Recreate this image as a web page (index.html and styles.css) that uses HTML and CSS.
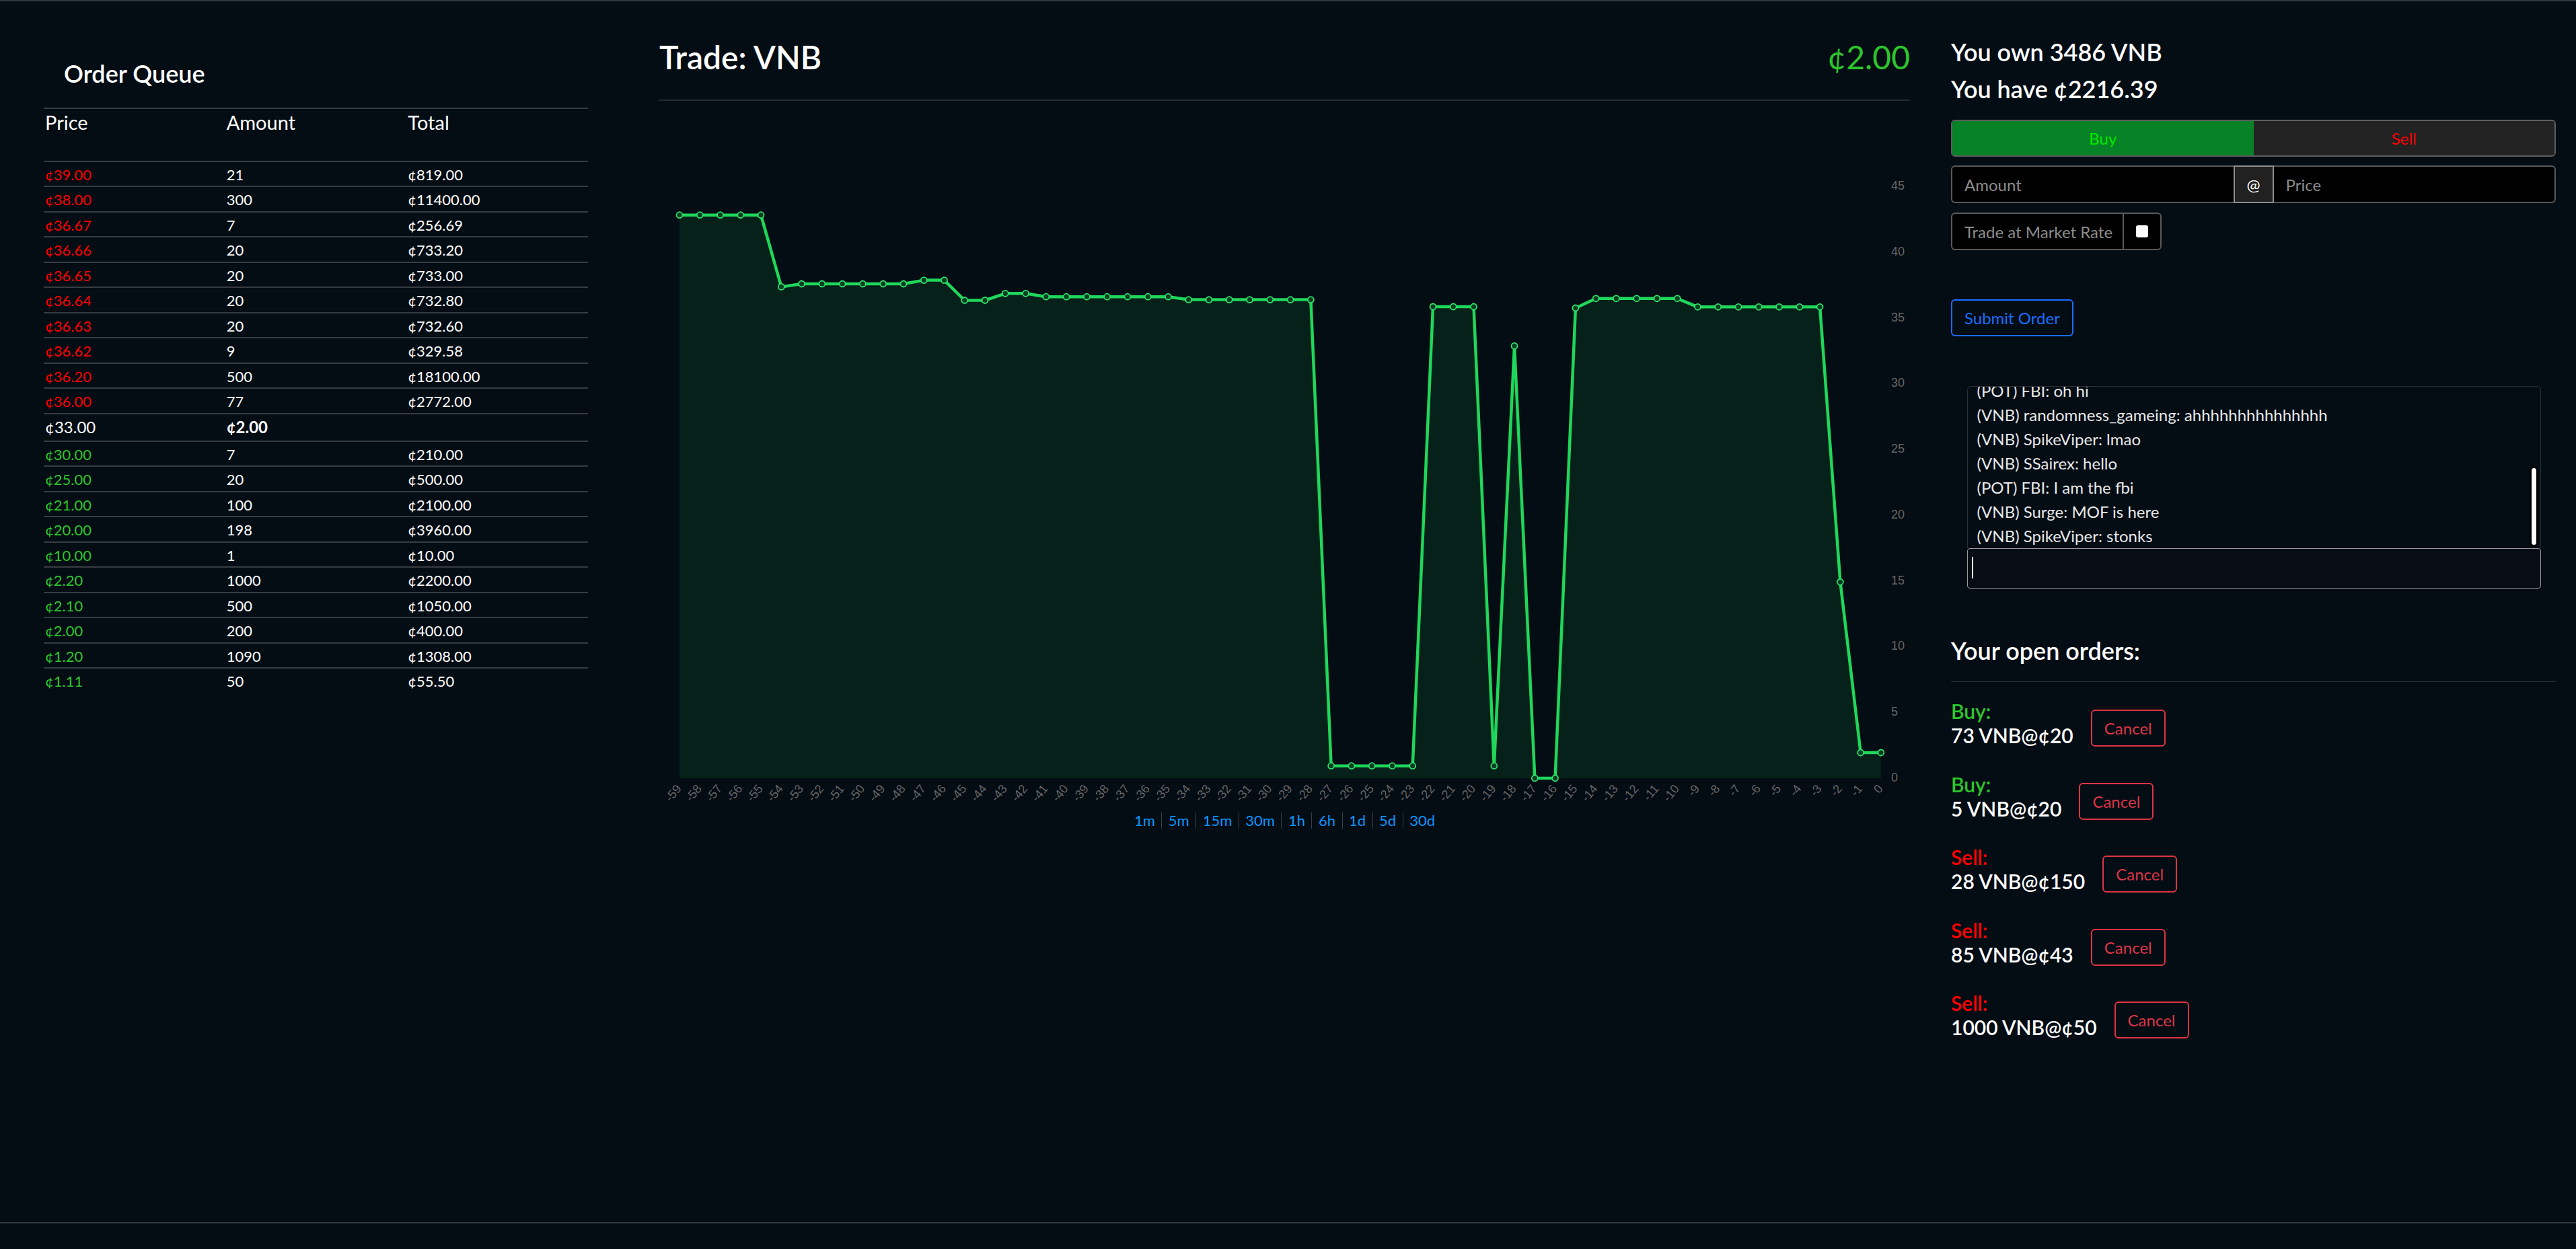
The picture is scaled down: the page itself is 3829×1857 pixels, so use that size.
FILE: index.html
```html
<!DOCTYPE html>
<html lang="en">
<head>
<meta charset="utf-8">
<title>Trade: VNB</title>
<link rel="stylesheet" href="styles.css">
</head>
<body>
<div class="app">
  <main class="layout">
    <section class="col col-queue">
      <h4 class="queue-title">Order Queue</h4>
      <table class="queue">
        <thead>
          <tr><th>Price</th><th>Amount</th><th>Total</th></tr>
        </thead>
        <tbody>
          <tr class="ask"><td class="price">¢39.00</td><td>21</td><td>¢819.00</td></tr>
          <tr class="ask"><td class="price">¢38.00</td><td>300</td><td>¢11400.00</td></tr>
          <tr class="ask"><td class="price">¢36.67</td><td>7</td><td>¢256.69</td></tr>
          <tr class="ask"><td class="price">¢36.66</td><td>20</td><td>¢733.20</td></tr>
          <tr class="ask"><td class="price">¢36.65</td><td>20</td><td>¢733.00</td></tr>
          <tr class="ask"><td class="price">¢36.64</td><td>20</td><td>¢732.80</td></tr>
          <tr class="ask"><td class="price">¢36.63</td><td>20</td><td>¢732.60</td></tr>
          <tr class="ask"><td class="price">¢36.62</td><td>9</td><td>¢329.58</td></tr>
          <tr class="ask"><td class="price">¢36.20</td><td>500</td><td>¢18100.00</td></tr>
          <tr class="ask"><td class="price">¢36.00</td><td>77</td><td>¢2772.00</td></tr>
          <tr class="mid"><td>¢33.00</td><td><b>¢2.00</b></td><td></td></tr>
          <tr class="bid"><td class="price">¢30.00</td><td>7</td><td>¢210.00</td></tr>
          <tr class="bid"><td class="price">¢25.00</td><td>20</td><td>¢500.00</td></tr>
          <tr class="bid"><td class="price">¢21.00</td><td>100</td><td>¢2100.00</td></tr>
          <tr class="bid"><td class="price">¢20.00</td><td>198</td><td>¢3960.00</td></tr>
          <tr class="bid"><td class="price">¢10.00</td><td>1</td><td>¢10.00</td></tr>
          <tr class="bid"><td class="price">¢2.20</td><td>1000</td><td>¢2200.00</td></tr>
          <tr class="bid"><td class="price">¢2.10</td><td>500</td><td>¢1050.00</td></tr>
          <tr class="bid"><td class="price">¢2.00</td><td>200</td><td>¢400.00</td></tr>
          <tr class="bid"><td class="price">¢1.20</td><td>1090</td><td>¢1308.00</td></tr>
          <tr class="bid"><td class="price">¢1.11</td><td>50</td><td>¢55.50</td></tr>
        </tbody>
      </table>
    </section>

    <section class="col col-chart">
      <div class="chart-head">
        <h2>Trade: VNB</h2>
        <span class="last">¢2.00</span>
      </div>
      <hr class="chart-rule">
      <svg class="chart" viewBox="0 0 1859 1004" width="1859" height="1004">
        <polygon class="area" points="30,957 30,119.7 60.27,119.7 90.54,119.7 120.81,119.7 151.08,119.7 181.35,226.4 211.62,222 241.89,222 272.16,222 302.43,222 332.7,222 362.97,222 393.24,216.6 423.51,216.6 453.78,246.5 484.05,246.5 514.32,236.3 544.59,236.3 574.86,241.2 605.13,241.2 635.4,241.2 665.67,241.2 695.94,241.2 726.21,241.2 756.48,241.2 786.75,245.6 817.02,245.6 847.29,245.6 877.56,245.6 907.83,245.6 938.1,245.6 968.37,245.6 998.64,938.7 1028.91,938.7 1059.18,938.7 1089.45,938.7 1119.72,938.7 1149.99,256 1180.26,256 1210.53,256 1240.8,938.7 1271.07,314.4 1301.34,957 1331.61,957 1361.88,258 1392.15,243.8 1422.42,243.8 1452.69,243.8 1482.96,243.8 1513.23,243.8 1543.5,256.3 1573.77,256.3 1604.04,256.3 1634.31,256.3 1664.58,256.3 1694.85,256.3 1725.12,256.3 1755.39,665.3 1785.66,919 1815.93,919 1815.93,957"/>
        <polyline class="line" points="30,119.7 60.27,119.7 90.54,119.7 120.81,119.7 151.08,119.7 181.35,226.4 211.62,222 241.89,222 272.16,222 302.43,222 332.7,222 362.97,222 393.24,216.6 423.51,216.6 453.78,246.5 484.05,246.5 514.32,236.3 544.59,236.3 574.86,241.2 605.13,241.2 635.4,241.2 665.67,241.2 695.94,241.2 726.21,241.2 756.48,241.2 786.75,245.6 817.02,245.6 847.29,245.6 877.56,245.6 907.83,245.6 938.1,245.6 968.37,245.6 998.64,938.7 1028.91,938.7 1059.18,938.7 1089.45,938.7 1119.72,938.7 1149.99,256 1180.26,256 1210.53,256 1240.8,938.7 1271.07,314.4 1301.34,957 1331.61,957 1361.88,258 1392.15,243.8 1422.42,243.8 1452.69,243.8 1482.96,243.8 1513.23,243.8 1543.5,256.3 1573.77,256.3 1604.04,256.3 1634.31,256.3 1664.58,256.3 1694.85,256.3 1725.12,256.3 1755.39,665.3 1785.66,919 1815.93,919"/>
        <g class="pts">
          <circle cx="30" cy="119.7" r="4.5"/><circle cx="60.27" cy="119.7" r="4.5"/><circle cx="90.54" cy="119.7" r="4.5"/><circle cx="120.81" cy="119.7" r="4.5"/><circle cx="151.08" cy="119.7" r="4.5"/>
          <circle cx="181.35" cy="226.4" r="4.5"/><circle cx="211.62" cy="222" r="4.5"/><circle cx="241.89" cy="222" r="4.5"/><circle cx="272.16" cy="222" r="4.5"/><circle cx="302.43" cy="222" r="4.5"/>
          <circle cx="332.7" cy="222" r="4.5"/><circle cx="362.97" cy="222" r="4.5"/><circle cx="393.24" cy="216.6" r="4.5"/><circle cx="423.51" cy="216.6" r="4.5"/><circle cx="453.78" cy="246.5" r="4.5"/>
          <circle cx="484.05" cy="246.5" r="4.5"/><circle cx="514.32" cy="236.3" r="4.5"/><circle cx="544.59" cy="236.3" r="4.5"/><circle cx="574.86" cy="241.2" r="4.5"/><circle cx="605.13" cy="241.2" r="4.5"/>
          <circle cx="635.4" cy="241.2" r="4.5"/><circle cx="665.67" cy="241.2" r="4.5"/><circle cx="695.94" cy="241.2" r="4.5"/><circle cx="726.21" cy="241.2" r="4.5"/><circle cx="756.48" cy="241.2" r="4.5"/>
          <circle cx="786.75" cy="245.6" r="4.5"/><circle cx="817.02" cy="245.6" r="4.5"/><circle cx="847.29" cy="245.6" r="4.5"/><circle cx="877.56" cy="245.6" r="4.5"/><circle cx="907.83" cy="245.6" r="4.5"/>
          <circle cx="938.1" cy="245.6" r="4.5"/><circle cx="968.37" cy="245.6" r="4.5"/><circle cx="998.64" cy="938.7" r="4.5"/><circle cx="1028.91" cy="938.7" r="4.5"/><circle cx="1059.18" cy="938.7" r="4.5"/>
          <circle cx="1089.45" cy="938.7" r="4.5"/><circle cx="1119.72" cy="938.7" r="4.5"/><circle cx="1149.99" cy="256" r="4.5"/><circle cx="1180.26" cy="256" r="4.5"/><circle cx="1210.53" cy="256" r="4.5"/>
          <circle cx="1240.8" cy="938.7" r="4.5"/><circle cx="1271.07" cy="314.4" r="4.5"/><circle cx="1301.34" cy="957" r="4.5"/><circle cx="1331.61" cy="957" r="4.5"/><circle cx="1361.88" cy="258" r="4.5"/>
          <circle cx="1392.15" cy="243.8" r="4.5"/><circle cx="1422.42" cy="243.8" r="4.5"/><circle cx="1452.69" cy="243.8" r="4.5"/><circle cx="1482.96" cy="243.8" r="4.5"/><circle cx="1513.23" cy="243.8" r="4.5"/>
          <circle cx="1543.5" cy="256.3" r="4.5"/><circle cx="1573.77" cy="256.3" r="4.5"/><circle cx="1604.04" cy="256.3" r="4.5"/><circle cx="1634.31" cy="256.3" r="4.5"/><circle cx="1664.58" cy="256.3" r="4.5"/>
          <circle cx="1694.85" cy="256.3" r="4.5"/><circle cx="1725.12" cy="256.3" r="4.5"/><circle cx="1755.39" cy="665.3" r="4.5"/><circle cx="1785.66" cy="919" r="4.5"/><circle cx="1815.93" cy="919" r="4.5"/>
        </g>
        <g class="ylab">
          <text x="1831" y="957">0</text>
          <text x="1831" y="859.25">5</text>
          <text x="1831" y="761.5">10</text>
          <text x="1831" y="663.75">15</text>
          <text x="1831" y="566">20</text>
          <text x="1831" y="468.25">25</text>
          <text x="1831" y="370.5">30</text>
          <text x="1831" y="272.75">35</text>
          <text x="1831" y="175">40</text>
          <text x="1831" y="77.25">45</text>
        </g>
        <g class="xlab">
          <text transform="translate(30 970) rotate(-50)">-59</text>
          <text transform="translate(60.27 970) rotate(-50)">-58</text>
          <text transform="translate(90.54 970) rotate(-50)">-57</text>
          <text transform="translate(120.81 970) rotate(-50)">-56</text>
          <text transform="translate(151.08 970) rotate(-50)">-55</text>
          <text transform="translate(181.35 970) rotate(-50)">-54</text>
          <text transform="translate(211.62 970) rotate(-50)">-53</text>
          <text transform="translate(241.89 970) rotate(-50)">-52</text>
          <text transform="translate(272.16 970) rotate(-50)">-51</text>
          <text transform="translate(302.43 970) rotate(-50)">-50</text>
          <text transform="translate(332.7 970) rotate(-50)">-49</text>
          <text transform="translate(362.97 970) rotate(-50)">-48</text>
          <text transform="translate(393.24 970) rotate(-50)">-47</text>
          <text transform="translate(423.51 970) rotate(-50)">-46</text>
          <text transform="translate(453.78 970) rotate(-50)">-45</text>
          <text transform="translate(484.05 970) rotate(-50)">-44</text>
          <text transform="translate(514.32 970) rotate(-50)">-43</text>
          <text transform="translate(544.59 970) rotate(-50)">-42</text>
          <text transform="translate(574.86 970) rotate(-50)">-41</text>
          <text transform="translate(605.13 970) rotate(-50)">-40</text>
          <text transform="translate(635.4 970) rotate(-50)">-39</text>
          <text transform="translate(665.67 970) rotate(-50)">-38</text>
          <text transform="translate(695.94 970) rotate(-50)">-37</text>
          <text transform="translate(726.21 970) rotate(-50)">-36</text>
          <text transform="translate(756.48 970) rotate(-50)">-35</text>
          <text transform="translate(786.75 970) rotate(-50)">-34</text>
          <text transform="translate(817.02 970) rotate(-50)">-33</text>
          <text transform="translate(847.29 970) rotate(-50)">-32</text>
          <text transform="translate(877.56 970) rotate(-50)">-31</text>
          <text transform="translate(907.83 970) rotate(-50)">-30</text>
          <text transform="translate(938.1 970) rotate(-50)">-29</text>
          <text transform="translate(968.37 970) rotate(-50)">-28</text>
          <text transform="translate(998.64 970) rotate(-50)">-27</text>
          <text transform="translate(1028.91 970) rotate(-50)">-26</text>
          <text transform="translate(1059.18 970) rotate(-50)">-25</text>
          <text transform="translate(1089.45 970) rotate(-50)">-24</text>
          <text transform="translate(1119.72 970) rotate(-50)">-23</text>
          <text transform="translate(1149.99 970) rotate(-50)">-22</text>
          <text transform="translate(1180.26 970) rotate(-50)">-21</text>
          <text transform="translate(1210.53 970) rotate(-50)">-20</text>
          <text transform="translate(1240.8 970) rotate(-50)">-19</text>
          <text transform="translate(1271.07 970) rotate(-50)">-18</text>
          <text transform="translate(1301.34 970) rotate(-50)">-17</text>
          <text transform="translate(1331.61 970) rotate(-50)">-16</text>
          <text transform="translate(1361.88 970) rotate(-50)">-15</text>
          <text transform="translate(1392.15 970) rotate(-50)">-14</text>
          <text transform="translate(1422.42 970) rotate(-50)">-13</text>
          <text transform="translate(1452.69 970) rotate(-50)">-12</text>
          <text transform="translate(1482.96 970) rotate(-50)">-11</text>
          <text transform="translate(1513.23 970) rotate(-50)">-10</text>
          <text transform="translate(1543.5 970) rotate(-50)">-9</text>
          <text transform="translate(1573.77 970) rotate(-50)">-8</text>
          <text transform="translate(1604.04 970) rotate(-50)">-7</text>
          <text transform="translate(1634.31 970) rotate(-50)">-6</text>
          <text transform="translate(1664.58 970) rotate(-50)">-5</text>
          <text transform="translate(1694.85 970) rotate(-50)">-4</text>
          <text transform="translate(1725.12 970) rotate(-50)">-3</text>
          <text transform="translate(1755.39 970) rotate(-50)">-2</text>
          <text transform="translate(1785.66 970) rotate(-50)">-1</text>
          <text transform="translate(1815.93 970) rotate(-50)">0</text>
        </g>
      </svg>
      <nav class="ranges">
        <a href="#">1m</a><a href="#">5m</a><a href="#">15m</a><a href="#">30m</a><a href="#">1h</a><a href="#">6h</a><a href="#">1d</a><a href="#">5d</a><a href="#">30d</a>
      </nav>
    </section>

    <aside class="col col-trade">
      <h4>You own 3486 VNB</h4>
      <h4 class="have">You have ¢2216.39</h4>
      <div class="side-toggle">
        <button class="side side-buy" type="button">Buy</button>
        <button class="side side-sell" type="button">Sell</button>
      </div>
      <div class="order-inputs">
        <input class="field field-amount" type="text" placeholder="Amount">
        <span class="at">@</span>
        <input class="field field-price" type="text" placeholder="Price">
      </div>
      <div class="market">
        <span class="market-label">Trade at Market Rate</span>
        <span class="check-cell"><span class="check"></span></span>
      </div>
      <button class="submit" type="button">Submit Order</button>

      <div class="chat">
        <div class="messages">
          <div class="message-list">
            <p>(POT) FBI: oh hi</p>
            <p>(VNB) randomness_gameing: ahhhhhhhhhhhhhhh</p>
            <p>(VNB) SpikeViper: lmao</p>
            <p>(VNB) SSairex: hello</p>
            <p>(POT) FBI: I am the fbi</p>
            <p>(VNB) Surge: MOF is here</p>
            <p>(VNB) SpikeViper: stonks</p>
          </div>
          <span class="thumb"></span>
        </div>
        <div class="chat-input">
          <input class="chat-field" type="text">
          <span class="caret"></span>
        </div>
      </div>

      <h4 class="orders-title">Your open orders:</h4>
      <hr class="orders-rule">
      <div class="order">
        <div class="order-text"><h5 class="kind-buy">Buy:</h5><h5>73 VNB@¢20</h5></div>
        <button class="cancel" type="button">Cancel</button>
      </div>
      <div class="order">
        <div class="order-text"><h5 class="kind-buy">Buy:</h5><h5>5 VNB@¢20</h5></div>
        <button class="cancel" type="button">Cancel</button>
      </div>
      <div class="order">
        <div class="order-text"><h5 class="kind-sell">Sell:</h5><h5>28 VNB@¢150</h5></div>
        <button class="cancel" type="button">Cancel</button>
      </div>
      <div class="order">
        <div class="order-text"><h5 class="kind-sell">Sell:</h5><h5>85 VNB@¢43</h5></div>
        <button class="cancel" type="button">Cancel</button>
      </div>
      <div class="order">
        <div class="order-text"><h5 class="kind-sell">Sell:</h5><h5>1000 VNB@¢50</h5></div>
        <button class="cancel" type="button">Cancel</button>
      </div>
    </aside>
  </main>
  <footer class="foot"></footer>
</div>
</body>
</html>
```

FILE: styles.css
```css
html, body {
  margin: 0;
  padding: 0;
  background: #040c14;
  color: #ffffff;
  font-family: Lato, "Noto Sans", sans-serif;
  overflow: hidden;
}

.app {
  min-height: 100vh;
  display: flex;
  flex-direction: column;
  border-top: 2px solid #33383e;
  box-sizing: border-box;
}

.layout {
  flex: 1;
  display: flex;
  align-items: flex-start;
  padding: 54px 30px 0 65px;
}

.foot {
  height: 38px;
  border-top: 2px solid #33383e;
}

h2, h4, h5 {
  margin: 0;
  font-weight: 600;
  line-height: 1.2;
}

/* ---------- order queue ---------- */
.col-queue {
  width: 809px;
  margin-right: 106px;
}

.queue-title {
  font-size: 36px;
  margin: 31.5px 0 29.3px 30px;
}

.queue {
  width: 809px;
  table-layout: fixed;
  border-collapse: separate;
  border-spacing: 0;
}

.queue th {
  text-align: left;
  font-weight: 400;
  font-size: 29px;
  line-height: 40px;
  padding: 0 2px 37px;
  border-top: 2px solid #383c41;
}

.queue td {
  font-size: 22px;
  line-height: 31.5px;
  padding: 3px 2px 1px;
  border-top: 2px solid #383c41;
  color: #ffffff;
  white-space: nowrap;
}

.queue .mid td {
  font-size: 24px;
  line-height: 36px;
  padding: 1.5px 2px;
}

.queue .mid b {
  font-weight: 700;
}

.ask .price {
  color: #ff0000;
}

.bid .price {
  color: #2cc52c;
}

/* ---------- chart ---------- */
.col-chart {
  width: 1859px;
  margin-right: 61px;
}

.chart-head {
  display: flex;
  justify-content: space-between;
  align-items: baseline;
}

.chart-head h2 {
  font-size: 48px;
}

.last {
  font-size: 48px;
  line-height: 1.2;
  color: #2cc52c;
}

.chart-rule {
  margin: 34px 0 0;
  border: 0;
  border-top: 2px solid #262b31;
}

.chart {
  display: block;
  margin-top: 50.4px;
}

.chart .area {
  fill: #062119;
}

.chart .line {
  fill: none;
  stroke: #1fd75a;
  stroke-width: 4.5;
  stroke-linejoin: round;
}

.chart .pts circle {
  fill: #0b3d23;
  stroke: #2ee06b;
  stroke-width: 1.8;
}

.chart text {
  font-family: "Liberation Sans", Arial, sans-serif;
  font-size: 18px;
  fill: #666666;
}

.chart .ylab text {
  dominant-baseline: middle;
}

.chart .xlab text {
  text-anchor: end;
  dominant-baseline: middle;
}

.ranges {
  display: flex;
  justify-content: center;
  margin-top: 4px;
}

.ranges a {
  font-size: 22px;
  line-height: 24px;
  padding: 0 9.5px;
  color: #0a96ff;
  text-decoration: none;
  border-left: 1px solid #3a3f45;
}

.ranges a:first-child {
  border-left: 0;
}

/* ---------- trade panel ---------- */
.col-trade {
  width: 899px;
}

.col-trade h4 {
  font-size: 36px;
  margin-bottom: 12px;
}

.col-trade .have {
  margin-bottom: 24px;
}

.side-toggle {
  display: flex;
  height: 55px;
  border: 2px solid #5e5e5e;
  border-radius: 6px;
  overflow: hidden;
  box-sizing: border-box;
}

.side {
  flex: 1;
  border: 0;
  margin: 0;
  font-family: inherit;
  font-size: 24px;
  cursor: pointer;
}

.side-buy {
  background: #078226;
  color: #00ea00;
}

.side-sell {
  background: #232323;
  color: #ff0000;
}

.order-inputs {
  display: flex;
  height: 56px;
  margin-top: 13px;
}

.field {
  flex: 1;
  min-width: 0;
  margin: 0;
  background: #000000;
  border: 2px solid #5a5a5a;
  color: #ffffff;
  font-family: inherit;
  font-size: 24px;
  padding: 0 18px;
  box-sizing: border-box;
  outline: none;
}

.field::placeholder {
  color: #8c8c8c;
}

.field-amount {
  border-radius: 6px 0 0 6px;
  border-right: 0;
}

.field-price {
  border-radius: 0 6px 6px 0;
  border-left: 0;
}

.at {
  width: 60px;
  display: flex;
  align-items: center;
  justify-content: center;
  background: #212121;
  border: 2px solid #8e8e8e;
  font-size: 24px;
  box-sizing: border-box;
}

.market {
  display: flex;
  width: 313px;
  height: 56px;
  margin-top: 14px;
  border: 2px solid #5a5a5a;
  border-radius: 6px;
  background: #000000;
  box-sizing: border-box;
}

.market-label {
  flex: 1;
  display: flex;
  align-items: center;
  padding: 0 0 0 18px;
  color: #8c8c8c;
  font-size: 24px;
  white-space: nowrap;
  border-right: 2px solid #5a5a5a;
}

.check-cell {
  width: 54px;
  display: flex;
  align-items: center;
  justify-content: center;
}

.check {
  width: 18px;
  height: 18px;
  background: #ffffff;
  border-radius: 3px;
}

.submit {
  display: block;
  margin-top: 73px;
  height: 55px;
  padding: 0 18px;
  border: 2px solid #1a6dff;
  border-radius: 6px;
  background: transparent;
  color: #1a6dff;
  font-family: inherit;
  font-size: 24px;
}

.chat {
  margin: 73.5px 22.5px 0 23.5px;
}

.messages {
  position: relative;
  height: 241px;
  box-sizing: border-box;
  border: 1px solid #2b3037;
  border-bottom: 0;
  border-radius: 6px 6px 0 0;
  overflow: hidden;
  display: flex;
  flex-direction: column;
  justify-content: flex-end;
}

.message-list {
  flex-shrink: 0;
  padding: 0 14px;
}

.messages p {
  margin: 0;
  font-size: 24px;
  line-height: 36px;
  color: #e8e8e8;
  white-space: nowrap;
}

.thumb {
  position: absolute;
  right: 3px;
  top: 118px;
  width: 13px;
  height: 120px;
  background: #ffffff;
  border: 3px solid #000000;
  border-radius: 8px;
  box-sizing: border-box;
}

.chat-input {
  position: relative;
  height: 60px;
}

.chat-field {
  display: block;
  width: 100%;
  height: 60px;
  margin: 0;
  box-sizing: border-box;
  border: 1px solid #9a9a9a;
  border-radius: 4px;
  background: #060d15;
  color: #ffffff;
  font-family: inherit;
  font-size: 24px;
  outline: none;
}

.caret {
  position: absolute;
  left: 7px;
  top: 13px;
  width: 2px;
  height: 32px;
  background: #ffffff;
}

.col-trade .orders-title {
  margin-top: 71.5px;
  margin-bottom: 0;
}

.orders-rule {
  border: 0;
  border-top: 1px solid #2a2f35;
  margin: 23.5px 0 25px;
}

.order {
  display: flex;
  align-items: flex-end;
  gap: 26px;
  margin-bottom: 36.5px;
}

.order h5 {
  font-size: 30px;
  line-height: 36px;
  white-space: nowrap;
}

.order .kind-buy {
  color: #2cc52c;
}

.order .kind-sell {
  color: #ff0000;
}

.cancel {
  height: 55px;
  margin: 0 0 1px;
  padding: 0 18px;
  border: 2px solid #dc3545;
  border-radius: 6px;
  background: transparent;
  color: #dc3545;
  font-family: inherit;
  font-size: 24px;
}
```
